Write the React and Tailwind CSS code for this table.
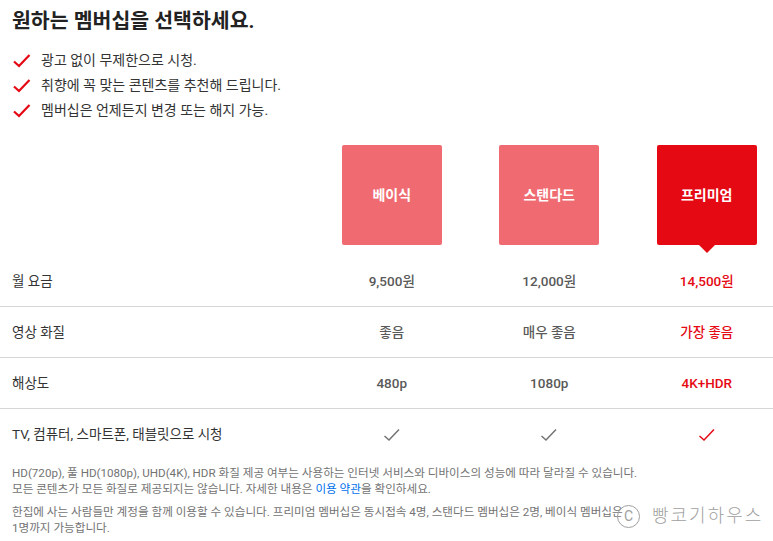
import React from 'react';

const plans = ['베이식', '스탠다드', '프리미엄'];

const rows = [
    { label: '월 요금', values: ['9,500원', '12,000원', '14,500원'] },
    { label: '영상 화질', values: ['좋음', '매우 좋음', '가장 좋음'] },
    { label: '해상도', values: ['480p', '1080p', '4K+HDR'] },
    { label: 'TV, 컴퓨터, 스마트폰, 태블릿으로 시청', values: ['check', 'check', 'check'] },
];

const perks = [
    '광고 없이 무제한으로 시청.',
    '취향에 꼭 맞는 콘텐츠를 추천해 드립니다.',
    '멤버십은 언제든지 변경 또는 해지 가능.',
];

function RedCheck() {
    return (
        <svg width="20" height="16" viewBox="0 0 20 16" className="shrink-0">
            <path d="M2 8.5 L7 13 L17.5 2" fill="none" stroke="#e50914" strokeWidth="2.2" />
        </svg>
    );
}

function ThinCheck({ red }) {
    return (
        <svg width="18" height="14" viewBox="0 0 18 14">
            <path
                d="M1.5 8 L6 12 L16 1.5"
                fill="none"
                stroke={red ? '#e50914' : '#737373'}
                strokeWidth="1.5"
            />
        </svg>
    );
}

function App() {
    return (
        <div
            className="relative w-[773px] h-[541px] overflow-hidden bg-white text-[#333]"
            style={{ fontFamily: 'Roboto, "Noto Sans CJK KR", sans-serif' }}>
            <h1 className="pl-3 pt-[8px] text-[20.5px] font-bold leading-[26px] text-[#222]">
                원하는 멤버십을 선택하세요.
            </h1>
            <ul className="mt-[14px] pl-3">
                {perks.map((perk) => (
                    <li key={perk} className="flex items-center h-[25px] text-[14px] text-[#333]">
                        <RedCheck />
                        <span className="ml-[9px]">{perk}</span>
                    </li>
                ))}
            </ul>

            <div className="mt-[22px] w-[786px]">
                <div className="grid grid-cols-[313px_157.5px_157.5px_157.5px]">
                    <div />
                    {plans.map((plan, i) => (
                        <div key={plan} className="flex justify-center">
                            <div
                                className={
                                    i === 2
                                        ? 'relative w-[100px] h-[100px] rounded-[2px] bg-[#e50914] flex items-center justify-center text-white font-bold text-[14px]'
                                        : 'relative w-[100px] h-[100px] rounded-[2px] bg-[#ef6b71] flex items-center justify-center text-white font-bold text-[14px]'
                                }>
                                {plan}
                                {i === 2 && (
                                    <div className="absolute left-1/2 -bottom-[8px] -ml-[8px] w-0 h-0 border-l-[8px] border-r-[8px] border-t-[8px] border-l-transparent border-r-transparent border-t-[#e50914]" />
                                )}
                            </div>
                        </div>
                    ))}
                </div>

                <div className="mt-[11px]">
                    {rows.map((row, r) => (
                        <div
                            key={row.label}
                            className={
                                r < rows.length - 1
                                    ? 'grid grid-cols-[313px_157.5px_157.5px_157.5px] h-[51px] items-center border-b border-[#d6d6d6]'
                                    : 'grid grid-cols-[313px_157.5px_157.5px_157.5px] h-[51px] items-center'
                            }>
                            <div className="pl-3 text-[13.5px] text-[#333]">{row.label}</div>
                            {row.values.map((v, i) => (
                                <div
                                    key={i}
                                    className={
                                        i === 2
                                            ? 'flex justify-center text-[13.5px] font-medium text-[#e50914]'
                                            : 'flex justify-center text-[13.5px] font-medium text-[#595959]'
                                    }>
                                    {v === 'check' ? <ThinCheck red={i === 2} /> : v}
                                </div>
                            ))}
                        </div>
                    ))}
                </div>
            </div>

            <div className="pl-3 pt-[5px] text-[11.6px] leading-[16px] text-[#737373]">
                <p>
                    HD(720p), 풀 HD(1080p), UHD(4K), HDR 화질 제공 여부는 사용하는 인터넷 서비스와 디바이스의 성능에 따라 달라질 수 있습니다.
                </p>
                <p>
                    모든 콘텐츠가 모든 화질로 제공되지는 않습니다. 자세한 내용은{' '}
                    <span className="text-[#0071eb]">이용 약관</span>을 확인하세요.
                </p>
                <p className="mt-[7px]">
                    한집에 사는 사람들만 계정을 함께 이용할 수 있습니다. 프리미엄 멤버십은 동시접속 4명, 스탠다드 멤버십은 2명, 베이식 멤버십은
                </p>
                <p>1명까지 가능합니다.</p>
            </div>

            <div className="absolute left-[617px] top-[504px] flex items-center gap-[12px] whitespace-nowrap text-[#a0a0a0]">
                <span className="flex items-center justify-center w-[23px] h-[23px] rounded-full border border-[#a0a0a0] text-[14px] leading-none">
                    C
                </span>
                <span className="text-[18px] leading-[24px] font-light tracking-[2px]">빵코기하우스</span>
            </div>
        </div>
    );
}

export default App;
